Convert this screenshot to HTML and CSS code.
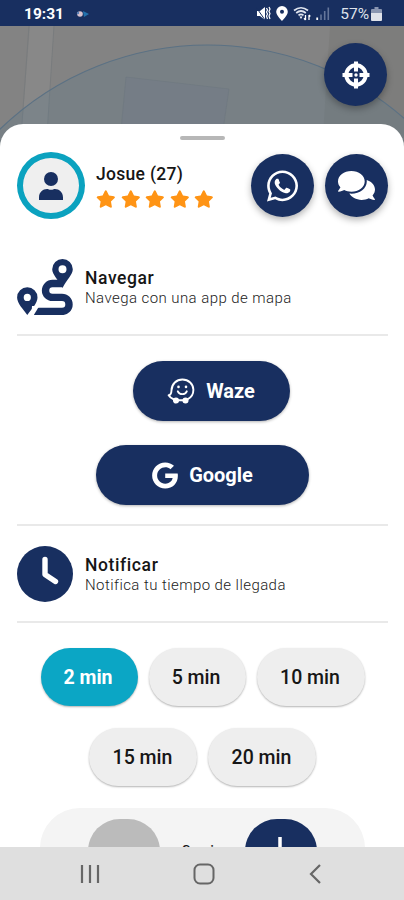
FILE: index.html
```
<!DOCTYPE html>
<html lang="es">
<head>
  <meta charset="utf-8">
  <meta name="viewport" content="width=device-width, initial-scale=1">
  <title>Viaje en curso</title>
  <link rel="stylesheet" href="styles.css">
</head>
<body>
  <div class="phone">
    <header class="status">
      <span class="time">19:31</span>
      <svg class="notif" width="16" height="10" viewBox="0 0 16 10">
        <circle cx="5" cy="5" r="2.8" fill="#d9c3cf"/>
        <path d="M8 2l6 3-5 3z" fill="#2272ad"/>
        <circle cx="3" cy="4" r="1.2" fill="#5b7fb5"/>
      </svg>
      <div class="status-icons">
        <svg width="15" height="15" viewBox="0 0 15 15">
          <path d="M1 5h3l5-4v13L4 10H1z" fill="#fff"/>
          <path d="M0 1l9 13" stroke="#182f60" stroke-width="1"/>
          <path d="M10.5 2l1 2-1 2 1 2-1 2 1 3M13 1l1 2-1 2.500 1 2-1 2.500 1 3" fill="none" stroke="#fff" stroke-width="1.200"/>
        </svg>
        <svg width="12" height="15" viewBox="0 0 12 15">
          <path d="M6 0a5.800 5.800 0 0 0-5.800 5.800C.2 9.500 6 15 6 15s5.800-5.500 5.800-9.200A5.800 5.800 0 0 0 6 0zm0 3.800a2 2 0 1 1 0 4 2 2 0 0 1 0-4z" fill="#fff"/>
        </svg>
        <svg width="18" height="15" viewBox="0 0 18 15">
          <path d="M1 4.500q7-5.500 14 0M3.200 7q4.800-4 9.600 0M5.500 9.400q2.500-2.200 5 0" fill="none" stroke="#dfe4ee" stroke-width="1.700"/>
          <path d="M6.500 10.500h3L8 13z" fill="#fff"/>
          <path d="M12.500 9v5M11 12.300l1.500 1.700M16 14V9M17.300 10.500L16 9" stroke="#fff" stroke-width="1.300"/>
        </svg>
        <svg width="14" height="15" viewBox="0 0 14 15">
          <path d="M1.200 11.500V14" stroke="#fff" stroke-width="1.800"/>
          <path d="M5 8.500V14M8.700 5V14M12.300 1.500V14" stroke="#65769a" stroke-width="1.600"/>
        </svg>
      </div>
      <span class="percent">57%</span>
      <svg width="11" height="14" viewBox="0 0 11 14">
        <path d="M3.500 0h4v2H10a1 1 0 0 1 1 1v3H0V3a1 1 0 0 1 1-1h2.500z" fill="#8a96b1"/>
        <path d="M0 6h11v7a1 1 0 0 1-1 1H1a1 1 0 0 1-1-1z" fill="#dfe2ea"/>
      </svg>
    </header>

    <div class="map">
      <svg class="map-art" width="404" height="125" viewBox="0 0 404 125">
        <path d="M30 0L20 125H46L54 0z" fill="#888"/>
        <path d="M29 0L20 125M54 0L46 125" stroke="#797c7e" fill="none"/>
        <path d="M330 0L322 125h82V0z" fill="#7d7d7c"/>
        <circle cx="208" cy="318" r="299" fill="#5f7a8a" fill-opacity=".3" stroke="#5b7184" stroke-width="1.200"/>
        <path d="M126 51L229 63 220 125H119z" fill="#707889" fill-opacity=".35" stroke="#6d777e" stroke-width=".5"/>
      </svg>
      <button class="round locate">
        <svg width="28" height="28" viewBox="0 0 28 28" fill="none" stroke="#fff">
          <circle cx="14" cy="14" r="9.700" stroke-width="4"/>
          <path d="M14 .5v10M14 17.500v10M.5 14h10M17.500 14h10" stroke-width="4"/>
          <circle cx="14" cy="14" r="1.700" fill="#fff" stroke="none"/>
        </svg>
      </button>
    </div>

    <main class="sheet">
      <div class="handle"></div>

      <section class="passenger">
        <div class="avatar">
          <svg width="26" height="28" viewBox="0 0 26 28" fill="#182f60">
            <circle cx="13" cy="7" r="7"/>
            <path d="M1 28v-2.500C1 20 5 17 9 17c1.500 0 2 .8 4 .8s2.500-.8 4-.8c4 0 8 3 8 8.500V28z"/>
          </svg>
        </div>
        <div class="who">
          <h1>Josue (27)</h1>
          <div class="stars">
            <svg viewBox="0 0 576 512"><path id="star" d="M259.300 17.800L194 150.200 47.900 171.500c-26.200 3.800-36.700 36.100-17.700 54.600l105.700 103-25 145.500c-4.500 26.300 23.200 46 46.400 33.700L288 439.600l130.700 68.700c23.200 12.200 50.900-7.400 46.400-33.700l-25-145.500 105.700-103c19-18.500 8.500-50.800-17.700-54.600L382 150.200 316.700 17.800c-11.700-23.600-45.600-23.900-57.400 0z"/></svg>
            <svg viewBox="0 0 576 512"><use href="#star"/></svg>
            <svg viewBox="0 0 576 512"><use href="#star"/></svg>
            <svg viewBox="0 0 576 512"><use href="#star"/></svg>
            <svg viewBox="0 0 576 512"><use href="#star"/></svg>
          </div>
        </div>
        <button class="round">
          <svg width="31" height="36" viewBox="0 0 448 512" fill="#fff"><path d="M380.900 97.100C339 55.100 283.200 32 223.900 32c-122.400 0-222 99.600-222 222 0 39.100 10.200 77.300 29.600 111L0 480l117.700-30.900c32.400 17.700 68.900 27 106.100 27h.1c122.300 0 224.100-99.600 224.100-222 0-59.300-25.200-115-67.100-157zm-157 341.600c-33.200 0-65.700-8.900-94-25.700l-6.700-4-69.800 18.300L72 359.200l-4.400-7c-18.500-29.400-28.200-63.300-28.200-98.200 0-101.700 82.800-184.500 184.600-184.500 49.300 0 95.600 19.200 130.400 54.100 34.800 34.900 56.200 81.200 56.100 130.500 0 101.800-84.900 184.600-186.600 184.600zm101.200-138.200c-5.500-2.800-32.800-16.200-37.900-18-5.100-1.900-8.800-2.800-12.500 2.800-3.700 5.600-14.300 18-17.600 21.800-3.200 3.700-6.500 4.200-12 1.400-32.600-16.300-54-29.100-75.500-66-5.700-9.800 5.700-9.100 16.300-30.300 1.800-3.700.9-6.900-.5-9.700-1.400-2.800-12.500-30.100-17.100-41.200-4.500-10.800-9.100-9.300-12.500-9.500-3.200-.2-6.900-.2-10.600-.2-3.700 0-9.700 1.400-14.800 6.900-5.100 5.600-19.400 19-19.400 46.300 0 27.300 19.900 53.700 22.600 57.400 2.800 3.700 39.100 59.700 94.800 83.800 35.200 15.200 49 16.500 66.600 13.900 10.700-1.600 32.800-13.400 37.400-26.400 4.600-13 4.600-24.100 3.200-26.400-1.300-2.500-5-3.900-10.500-6.600z"/></svg>
        </button>
        <button class="round">
          <svg width="37" height="33" viewBox="0 0 576 512" fill="#fff"><path d="M416 192c0-88.400-93.100-160-208-160S0 103.600 0 192c0 34.300 14.100 65.900 38 92-13.400 30.200-35.500 54.200-35.800 54.500-2.200 2.300-2.800 5.700-1.500 8.700S4.800 352 8 352c36.600 0 66.900-12.300 88.700-25 32.200 15.700 70.300 25 111.300 25 114.900 0 208-71.600 208-160zm122 220c23.900-26 38-57.700 38-92 0-66.900-53.500-124.200-129.300-148.100.9 6.600 1.300 13.300 1.300 20.100 0 105.900-107.700 192-240 192-10.800 0-21.300-.8-31.700-1.900C207.800 439.600 281.800 480 368 480c41 0 79.100-9.200 111.300-25 21.800 12.700 52.100 25 88.700 25 3.200 0 6.100-1.900 7.300-4.800 1.300-2.900.7-6.300-1.500-8.700-.3-.3-22.400-24.200-35.800-54.500z"/></svg>
        </button>
      </section>

      <section class="section-head">
        <svg width="56" height="56" viewBox="0 0 56 56">
          <path fill="#182f60" fill-rule="evenodd" d="M45.500 0a10.300 10.300 0 0 0-10.300 10.300c0 5 6 10.700 10.300 18.700 4.300-8 10.300-13.700 10.300-18.700A10.300 10.300 0 0 0 45.500 0zm0 6.300a4 4 0 1 1 0 8 4 4 0 0 1 0-8z"/>
          <path fill="#182f60" fill-rule="evenodd" d="M10.300 28.200A10.200 10.200 0 0 0 .1 38.400C.1 44 6 50 10.300 56c4.300-6 10.200-12 10.200-17.600a10.200 10.200 0 0 0-10.200-10.200zm0 6.600a3.600 3.600 0 1 1 0 7.200 3.600 3.600 0 0 1 0-7.200z"/>
          <path fill="none" stroke="#182f60" stroke-width="7.400" d="M45 24.500H35.500a6.900 6.900 0 0 0 0 13.900H45a7 7 0 0 1 0 14H17"/>
          <path fill="#fff" d="M15 47h7.300L16.500 56.500h-2z"/>
        </svg>
        <div>
          <h2>Navegar</h2>
          <p>Navega con una app de mapa</p>
        </div>
      </section>

      <div class="apps">
        <button class="app waze">
          <svg width="28" height="26" viewBox="0 0 28 26" fill="none" stroke="#fff" stroke-width="1.900" stroke-linecap="round" stroke-linejoin="round">
            <path d="M7 21.500C4.500 20.500 2.600 19 1.600 17.300c2.400-.3 2.800-1.800 2.900-5C4.700 6 9.500 1.500 15.400 1.500c6.200 0 11 4.700 11 10.300 0 4.200-2.500 8-6 9.600M11 22.300h5"/>
            <circle cx="9" cy="22.500" r="2.100" fill="#fff"/>
            <circle cx="18.500" cy="22.500" r="2.100" fill="#fff"/>
            <path d="M11.500 8.700v.3M19 8.700v.3" stroke-width="2.600"/>
            <path d="M10.800 13.300c1.700 3.800 7.300 3.800 9 0"/>
          </svg>
          Waze
        </button>
        <button class="app google">
          <svg width="26" height="27" viewBox="0 0 488 512" fill="#fff"><path d="M488 261.800C488 403.300 391.100 504 248 504 110.800 504 0 393.200 0 256S110.800 8 248 8c66.800 0 123 24.500 166.300 64.900l-67.500 64.900C258.500 52.600 94.300 116.600 94.300 256c0 86.500 69.100 156.600 153.700 156.600 98.200 0 135-70.400 140.800-106.900H248v-85.300h236.100c2.300 12.700 3.900 24.900 3.900 41.400z"/></svg>
          Google
        </button>
      </div>

      <section class="section-head">
        <svg width="56" height="56" viewBox="0 0 56 56">
          <circle cx="28" cy="28" r="28" fill="#182f60"/>
          <path d="M28 13.500V28.500L38.500 35.500" fill="none" stroke="#fff" stroke-width="5.400" stroke-linecap="round" stroke-linejoin="round"/>
        </svg>
        <div>
          <h2>Notificar</h2>
          <p>Notifica tu tiempo de llegada</p>
        </div>
      </section>

      <div class="times">
        <button class="pill active">2 min</button>
        <button class="pill">5 min</button>
        <button class="pill wide">10 min</button>
        <button class="pill wide">15 min</button>
        <button class="pill wide">20 min</button>
      </div>

      <div class="counter">
        <button class="step disabled"></button>
        <span>0 min</span>
        <button class="step">
          <svg width="28" height="28" viewBox="0 0 28 28"><path d="M13 0v28M-1 14h28" stroke="#fff" stroke-width="3.500"/></svg>
        </button>
      </div>
    </main>

    <nav class="navbar">
      <svg width="20" height="20" viewBox="0 0 20 20" stroke="#666" stroke-width="2.200"><path d="M2 1v18M10 1v18M18 1v18"/></svg>
      <svg width="22" height="22" viewBox="0 0 22 22" fill="none" stroke="#666" stroke-width="2"><rect x="1.500" y="1.500" width="19" height="19" rx="5.500"/></svg>
      <svg width="18" height="20" viewBox="0 0 18 20" fill="none" stroke="#666" stroke-width="2.200"><path d="M12 1L3 10l9 9"/></svg>
    </nav>
  </div>
</body>
</html>
```

FILE: styles.css
```
* {
  box-sizing: border-box;
}
body {
  margin: 0;
  font-family: Roboto, "Liberation Sans", sans-serif;
  color: #161616;
}
h1,
h2,
p {
  margin: 0;
}
svg {
  display: block;
  flex: none;
}
button {
  border: 0;
  padding: 0;
  font-family: inherit;
}
.phone {
  display: flex;
  flex-direction: column;
  width: 404px;
  height: 900px;
  overflow: hidden;
}
.status {
  flex: none;
  display: flex;
  align-items: center;
  height: 26px;
  padding: 1px 22px 0 24px;
  background: #182f60;
  color: #fff;
}
.time {
  width: 51px;
  font-size: 15.5px;
  font-weight: 700;
}
.status-icons {
  display: flex;
  gap: 5px;
  margin-left: auto;
  margin-right: 10px;
}
.percent {
  margin-right: 2px;
  font-size: 15.5px;
  color: #dfe2ea;
}
.map {
  position: relative;
  flex: none;
  height: 124px;
  background: #838383;
}
.round {
  flex: none;
  display: flex;
  align-items: center;
  justify-content: center;
  width: 63px;
  height: 63px;
  border-radius: 50%;
  background: #182f60;
  box-shadow: 0 3px 7px rgba(0, 0, 0, 0.3);
}
.locate {
  position: absolute;
  top: 17px;
  right: 17px;
}
.sheet {
  position: relative;
  flex: 1;
  min-height: 0;
  margin-top: -26px;
  padding: 12px 16px 0 17px;
  border-radius: 23px 23px 0 0;
  background: #fff;
  overflow: hidden;
}
.handle {
  width: 45px;
  height: 4px;
  margin: 0 auto;
  border-radius: 2px;
  background: #b7b7b7;
}
.passenger {
  display: flex;
  align-items: center;
  gap: 11px;
  height: 67px;
  margin-top: 12px;
}
.avatar {
  display: flex;
  align-items: center;
  justify-content: center;
  width: 68px;
  height: 67px;
  border: 6px solid #0ba2bf;
  border-radius: 50%;
  background: #efefef;
}
.who {
  flex: 1;
}
h1,
h2 {
  font-size: 17.5px;
  line-height: 21px;
  font-weight: 500;
  letter-spacing: 0.3px;
}
h2 {
  letter-spacing: 0.6px;
}
.stars {
  display: flex;
  gap: 5px;
  margin-top: 5px;
}
.stars svg {
  width: 19.6px;
  height: 18px;
  fill: #ff9415;
}
.section-head {
  display: flex;
  align-items: center;
  gap: 12px;
  height: 97px;
  border-bottom: 2px solid #e9e9e9;
}
.section-head div {
  padding-top: 3px;
}
.passenger + .section-head {
  margin-top: 20px;
}
.section-head p {
  font-size: 15px;
  line-height: 19px;
  letter-spacing: 0.43px;
  font-weight: 300;
  color: #222;
}
.apps {
  display: flex;
  flex-direction: column;
  align-items: center;
  gap: 24px;
  padding: 25px 0 19px;
  border-bottom: 2px solid #e9e9e9;
}
.app {
  display: flex;
  align-items: center;
  justify-content: center;
  gap: 11px;
  height: 60px;
  border-radius: 30px;
  background: #182f60;
  box-shadow: 0 1px 3px rgba(0, 0, 0, 0.3);
  color: #fff;
  font-size: 20px;
  font-weight: 700;
}
.waze {
  width: 157px;
  margin-left: 17px;
}
.google {
  width: 213px;
}
.times {
  display: flex;
  flex-wrap: wrap;
  justify-content: center;
  gap: 22px 11px;
  padding-top: 25px;
}
.pill {
  width: 97px;
  height: 58px;
  padding-right: 2px;
  border-radius: 29px;
  background: #eee;
  box-shadow: 0 1px 2px rgba(0, 0, 0, 0.3);
  color: #161616;
  font-size: 19.5px;
  font-weight: 500;
}
.wide {
  width: 108px;
  padding-right: 1px;
}
.active {
  background: #0ba6c5;
  color: #fff;
  font-weight: 700;
}
.counter {
  display: flex;
  align-items: center;
  justify-content: space-between;
  width: 325px;
  height: 86px;
  margin: 22px auto 0;
  padding: 0 48px;
  border-radius: 40px;
  background: #f4f4f4;
  font-size: 17px;
}
.step {
  display: flex;
  align-items: center;
  justify-content: center;
  width: 72px;
  height: 64px;
  border-radius: 32px;
  background: #182f60;
}
.disabled {
  background: #bbb;
}
.navbar {
  flex: none;
  display: flex;
  align-items: center;
  justify-content: space-between;
  height: 53px;
  padding: 0 78px 0 80px;
  background: #dfdfdf;
}
```
